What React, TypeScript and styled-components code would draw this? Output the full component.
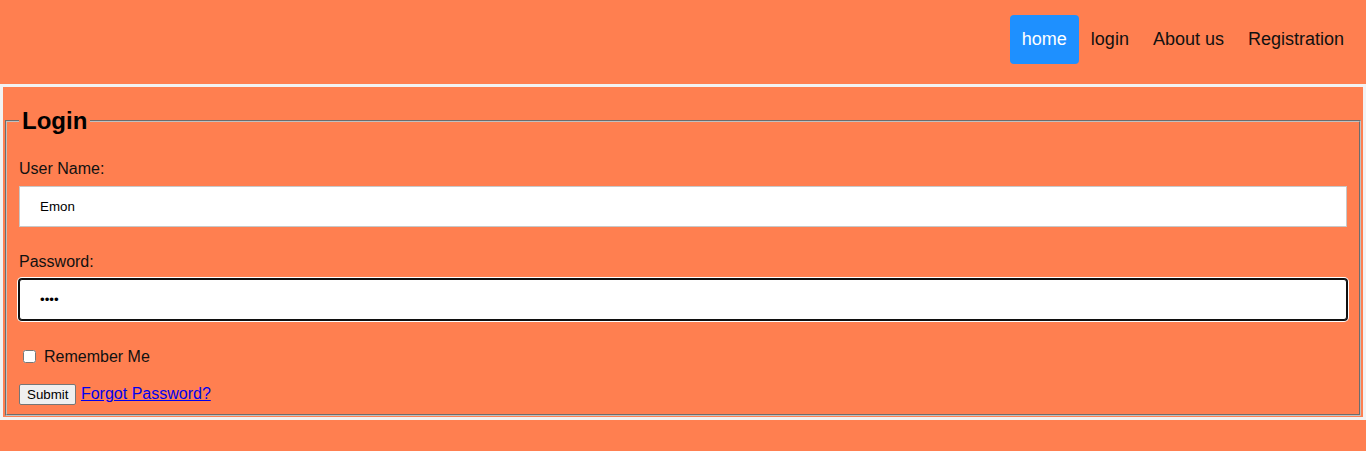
import styled, { createGlobalStyle } from 'styled-components';

const GlobalStyle = createGlobalStyle`
  html, body {
    margin: 0;
    padding: 0;
    background: #ff7f50;
    font-family: "Liberation Sans", Arial, sans-serif;
    color: #111;
  }
`;

const Header = styled.header`
  height: 84px;
  background: #ff7f50;
  display: flex;
  justify-content: flex-end;
  align-items: flex-start;
  padding: 15px 10px 0 0;
  box-sizing: border-box;
`;

const NavList = styled.ul`
  list-style: none;
  margin: 0;
  padding: 0;
  display: flex;
`;

const NavLink = styled.a<{ $active?: boolean }>`
  display: block;
  padding: 14px 12px;
  height: 49px;
  box-sizing: border-box;
  font-size: 18px;
  line-height: 21px;
  text-decoration: none;
  border-radius: 4px;
  color: ${({ $active }) => ($active ? '#fff' : '#111')};
  background: ${({ $active }) => ($active ? '#1e90ff' : 'transparent')};
`;

const Section = styled.section`
  border: 3px solid #f2f2f2;
  background: #ff7f50;
  padding: 20px 2px 1px;
`;

const Fieldset = styled.fieldset`
  margin: 0;
  padding: 0 12px 9px;
  border: 2px groove rgb(192, 192, 192);
`;

const Legend = styled.legend`
  font-size: 24px;
  font-weight: bold;
  padding: 0 3px;
  line-height: 28px;
  color: #000;
`;

const Field = styled.div<{ $top: number }>`
  display: flex;
  flex-direction: column;
  gap: 8px;
  margin-top: ${({ $top }) => $top}px;
`;

const Label = styled.label`
  font-size: 16px;
  line-height: 18px;
`;

const TextInput = styled.input<{ $focused?: boolean }>`
  width: 100%;
  height: 41px;
  box-sizing: border-box;
  padding: 0 20px;
  font-family: "Liberation Sans", Arial, sans-serif;
  font-size: 13.33px;
  color: #000;
  background: #fff;
  border: 1px solid ${({ $focused }) => ($focused ? '#101010' : '#c8c8c8')};
  border-radius: ${({ $focused }) => ($focused ? '3px' : '0')};
  box-shadow: ${({ $focused }) =>
    $focused ? '0 0 0 1px #101010, 0 0 0 2px #fff' : 'none'};
  outline: none;
`;

const CheckRow = styled.div`
  display: flex;
  align-items: center;
  height: 19px;
  margin-top: 27px;
  font-size: 16px;
`;

const CheckBox = styled.input`
  margin: 3px 8px 3px 4px;
  width: 13px;
  height: 13px;
`;

const ActionRow = styled.div`
  margin-top: 17px;
  font-size: 16px;
  line-height: 21px;
`;

const SubmitButton = styled.button`
  font-family: "Liberation Sans", Arial, sans-serif;
  font-size: 13.33px;
  padding: 1px 7px;
  height: 21px;
  color: #000;
  background: #efefef;
  border: 1px solid #767676;
  border-radius: 2px;
`;

const ForgotLink = styled.a`
  color: #0000ee;
  text-decoration: underline;
  font-size: 16px;
`;

const navItems = ['home', 'login', 'About us', 'Registration'];

export default function App() {
  return (
    <>
      <GlobalStyle />
      <Header>
        <NavList>
          {navItems.map((item, i) => (
            <li key={item}>
              <NavLink href="#" $active={i === 0}>
                {item}
              </NavLink>
            </li>
          ))}
        </NavList>
      </Header>
      <Section>
        <form onSubmit={(e) => e.preventDefault()}>
          <Fieldset>
            <Legend>Login</Legend>
            <Field $top={25}>
              <Label htmlFor="user">User Name:</Label>
              <TextInput id="user" type="text" defaultValue="Emon" />
            </Field>
            <Field $top={26}>
              <Label htmlFor="pass">Password:</Label>
              <TextInput id="pass" type="password" defaultValue="abcd" $focused autoFocus />
            </Field>
            <CheckRow>
              <CheckBox type="checkbox" id="remember" />
              <label htmlFor="remember">Remember Me</label>
            </CheckRow>
            <ActionRow>
              <SubmitButton type="submit">Submit</SubmitButton>{' '}
              <ForgotLink href="#">Forgot Password?</ForgotLink>
            </ActionRow>
          </Fieldset>
        </form>
      </Section>
    </>
  );
}
